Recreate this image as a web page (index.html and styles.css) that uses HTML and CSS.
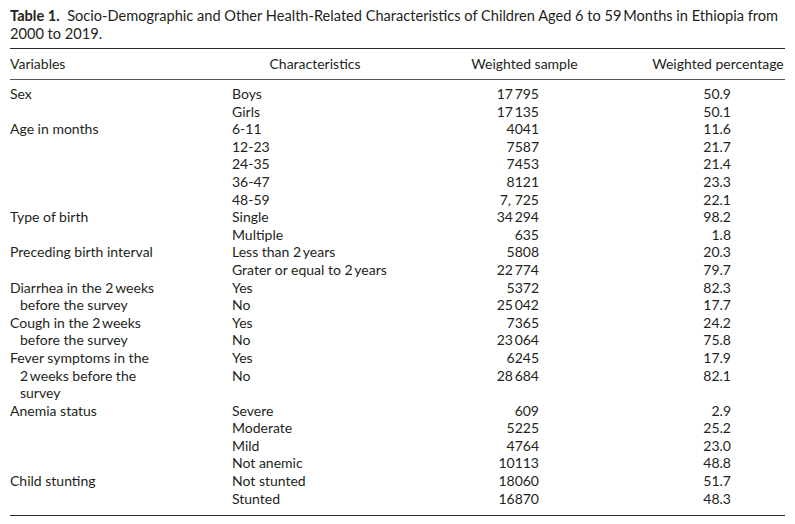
FILE: index.html
```html
<!DOCTYPE html>
<html lang="en">
<head>
<meta charset="utf-8">
<title>Table 1</title>
<link rel="stylesheet" href="styles.css">
</head>
<body>
<div class="doc">
  <p class="caption"><span class="label">Table 1.</span>&nbsp; Socio-Demographic and Other Health-Related Characteristics of Children Aged 6 to 59&#8201;Months in Ethiopia from<br>2000 to 2019.</p>
  <div class="table">
    <div class="row head">
      <div class="c1">Variables</div>
      <div class="c2 center">Characteristics</div>
      <div class="c3 center">Weighted sample</div>
      <div class="c4 center">Weighted percentage</div>
    </div>
    <div class="body">
      <div class="row"><div class="c1">Sex</div><div class="c2">Boys</div><div class="c3 num">17&#8201;795</div><div class="c4 num">50.9</div></div>
      <div class="row"><div class="c1"></div><div class="c2">Girls</div><div class="c3 num">17&#8201;135</div><div class="c4 num">50.1</div></div>
      <div class="row"><div class="c1">Age in months</div><div class="c2">6-11</div><div class="c3 num">4041</div><div class="c4 num">11.6</div></div>
      <div class="row"><div class="c1"></div><div class="c2">12-23</div><div class="c3 num">7587</div><div class="c4 num">21.7</div></div>
      <div class="row"><div class="c1"></div><div class="c2">24-35</div><div class="c3 num">7453</div><div class="c4 num">21.4</div></div>
      <div class="row"><div class="c1"></div><div class="c2">36-47</div><div class="c3 num">8121</div><div class="c4 num">23.3</div></div>
      <div class="row"><div class="c1"></div><div class="c2">48-59</div><div class="c3 num">7, 725</div><div class="c4 num">22.1</div></div>
      <div class="row"><div class="c1">Type of birth</div><div class="c2">Single</div><div class="c3 num">34&#8201;294</div><div class="c4 num">98.2</div></div>
      <div class="row"><div class="c1"></div><div class="c2">Multiple</div><div class="c3 num">635</div><div class="c4 num">1.8</div></div>
      <div class="row"><div class="c1">Preceding birth interval</div><div class="c2">Less than 2&#8201;years</div><div class="c3 num">5808</div><div class="c4 num">20.3</div></div>
      <div class="row"><div class="c1"></div><div class="c2">Grater or equal to 2&#8201;years</div><div class="c3 num">22&#8201;774</div><div class="c4 num">79.7</div></div>
      <div class="row"><div class="c1">Diarrhea in the 2&#8201;weeks</div><div class="c2">Yes</div><div class="c3 num">5372</div><div class="c4 num">82.3</div></div>
      <div class="row"><div class="c1 cont">before the survey</div><div class="c2">No</div><div class="c3 num">25&#8201;042</div><div class="c4 num">17.7</div></div>
      <div class="row"><div class="c1">Cough in the 2&#8201;weeks</div><div class="c2">Yes</div><div class="c3 num">7365</div><div class="c4 num">24.2</div></div>
      <div class="row"><div class="c1 cont">before the survey</div><div class="c2">No</div><div class="c3 num">23&#8201;064</div><div class="c4 num">75.8</div></div>
      <div class="row"><div class="c1">Fever symptoms in the</div><div class="c2">Yes</div><div class="c3 num">6245</div><div class="c4 num">17.9</div></div>
      <div class="row"><div class="c1 cont">2&#8201;weeks before the</div><div class="c2">No</div><div class="c3 num">28&#8201;684</div><div class="c4 num">82.1</div></div>
      <div class="row"><div class="c1 cont">survey</div><div class="c2"></div><div class="c3 num"></div><div class="c4 num"></div></div>
      <div class="row"><div class="c1">Anemia status</div><div class="c2">Severe</div><div class="c3 num">609</div><div class="c4 num">2.9</div></div>
      <div class="row"><div class="c1"></div><div class="c2">Moderate</div><div class="c3 num">5225</div><div class="c4 num">25.2</div></div>
      <div class="row"><div class="c1"></div><div class="c2">Mild</div><div class="c3 num">4764</div><div class="c4 num">23.0</div></div>
      <div class="row"><div class="c1"></div><div class="c2">Not anemic</div><div class="c3 num">10113</div><div class="c4 num">48.8</div></div>
      <div class="row"><div class="c1">Child stunting</div><div class="c2">Not stunted</div><div class="c3 num">18060</div><div class="c4 num">51.7</div></div>
      <div class="row"><div class="c1"></div><div class="c2">Stunted</div><div class="c3 num">16870</div><div class="c4 num">48.3</div></div>
    </div>
  </div>
</div>
</body>
</html>
```

FILE: styles.css
```css
html, body {
  margin: 0;
  padding: 0;
  background: #ffffff;
}

body {
  font-family: "Lato", "Open Sans", "Liberation Sans", sans-serif;
  font-size: 14px;
  color: #231f20;
}

.doc {
  padding: 7px 10px 0 10px;
  width: 775px;
}

.caption {
  margin: 0;
  font-size: 14.6px;
  line-height: 18px;
  white-space: nowrap;
}

.label {
  font-weight: 700;
}

.table {
  margin-top: 5px;
  border-top: 1px solid #2b2b2b;
  border-bottom: 1px solid #2b2b2b;
}

.row {
  display: grid;
  grid-template-columns: 222px 166px 253px 134px;
  line-height: 17.6px;
  white-space: nowrap;
}

.head {
  height: 30px;
  align-items: center;
  border-bottom: 1px solid #555555;
}

.body {
  padding: 5px 0 8px 0;
}

.center {
  text-align: center;
}

.cont {
  padding-left: 10px;
}

.c3.num {
  text-align: right;
  padding-right: 112px;
}

.c4.num {
  text-align: right;
  padding-right: 54px;
}
```
